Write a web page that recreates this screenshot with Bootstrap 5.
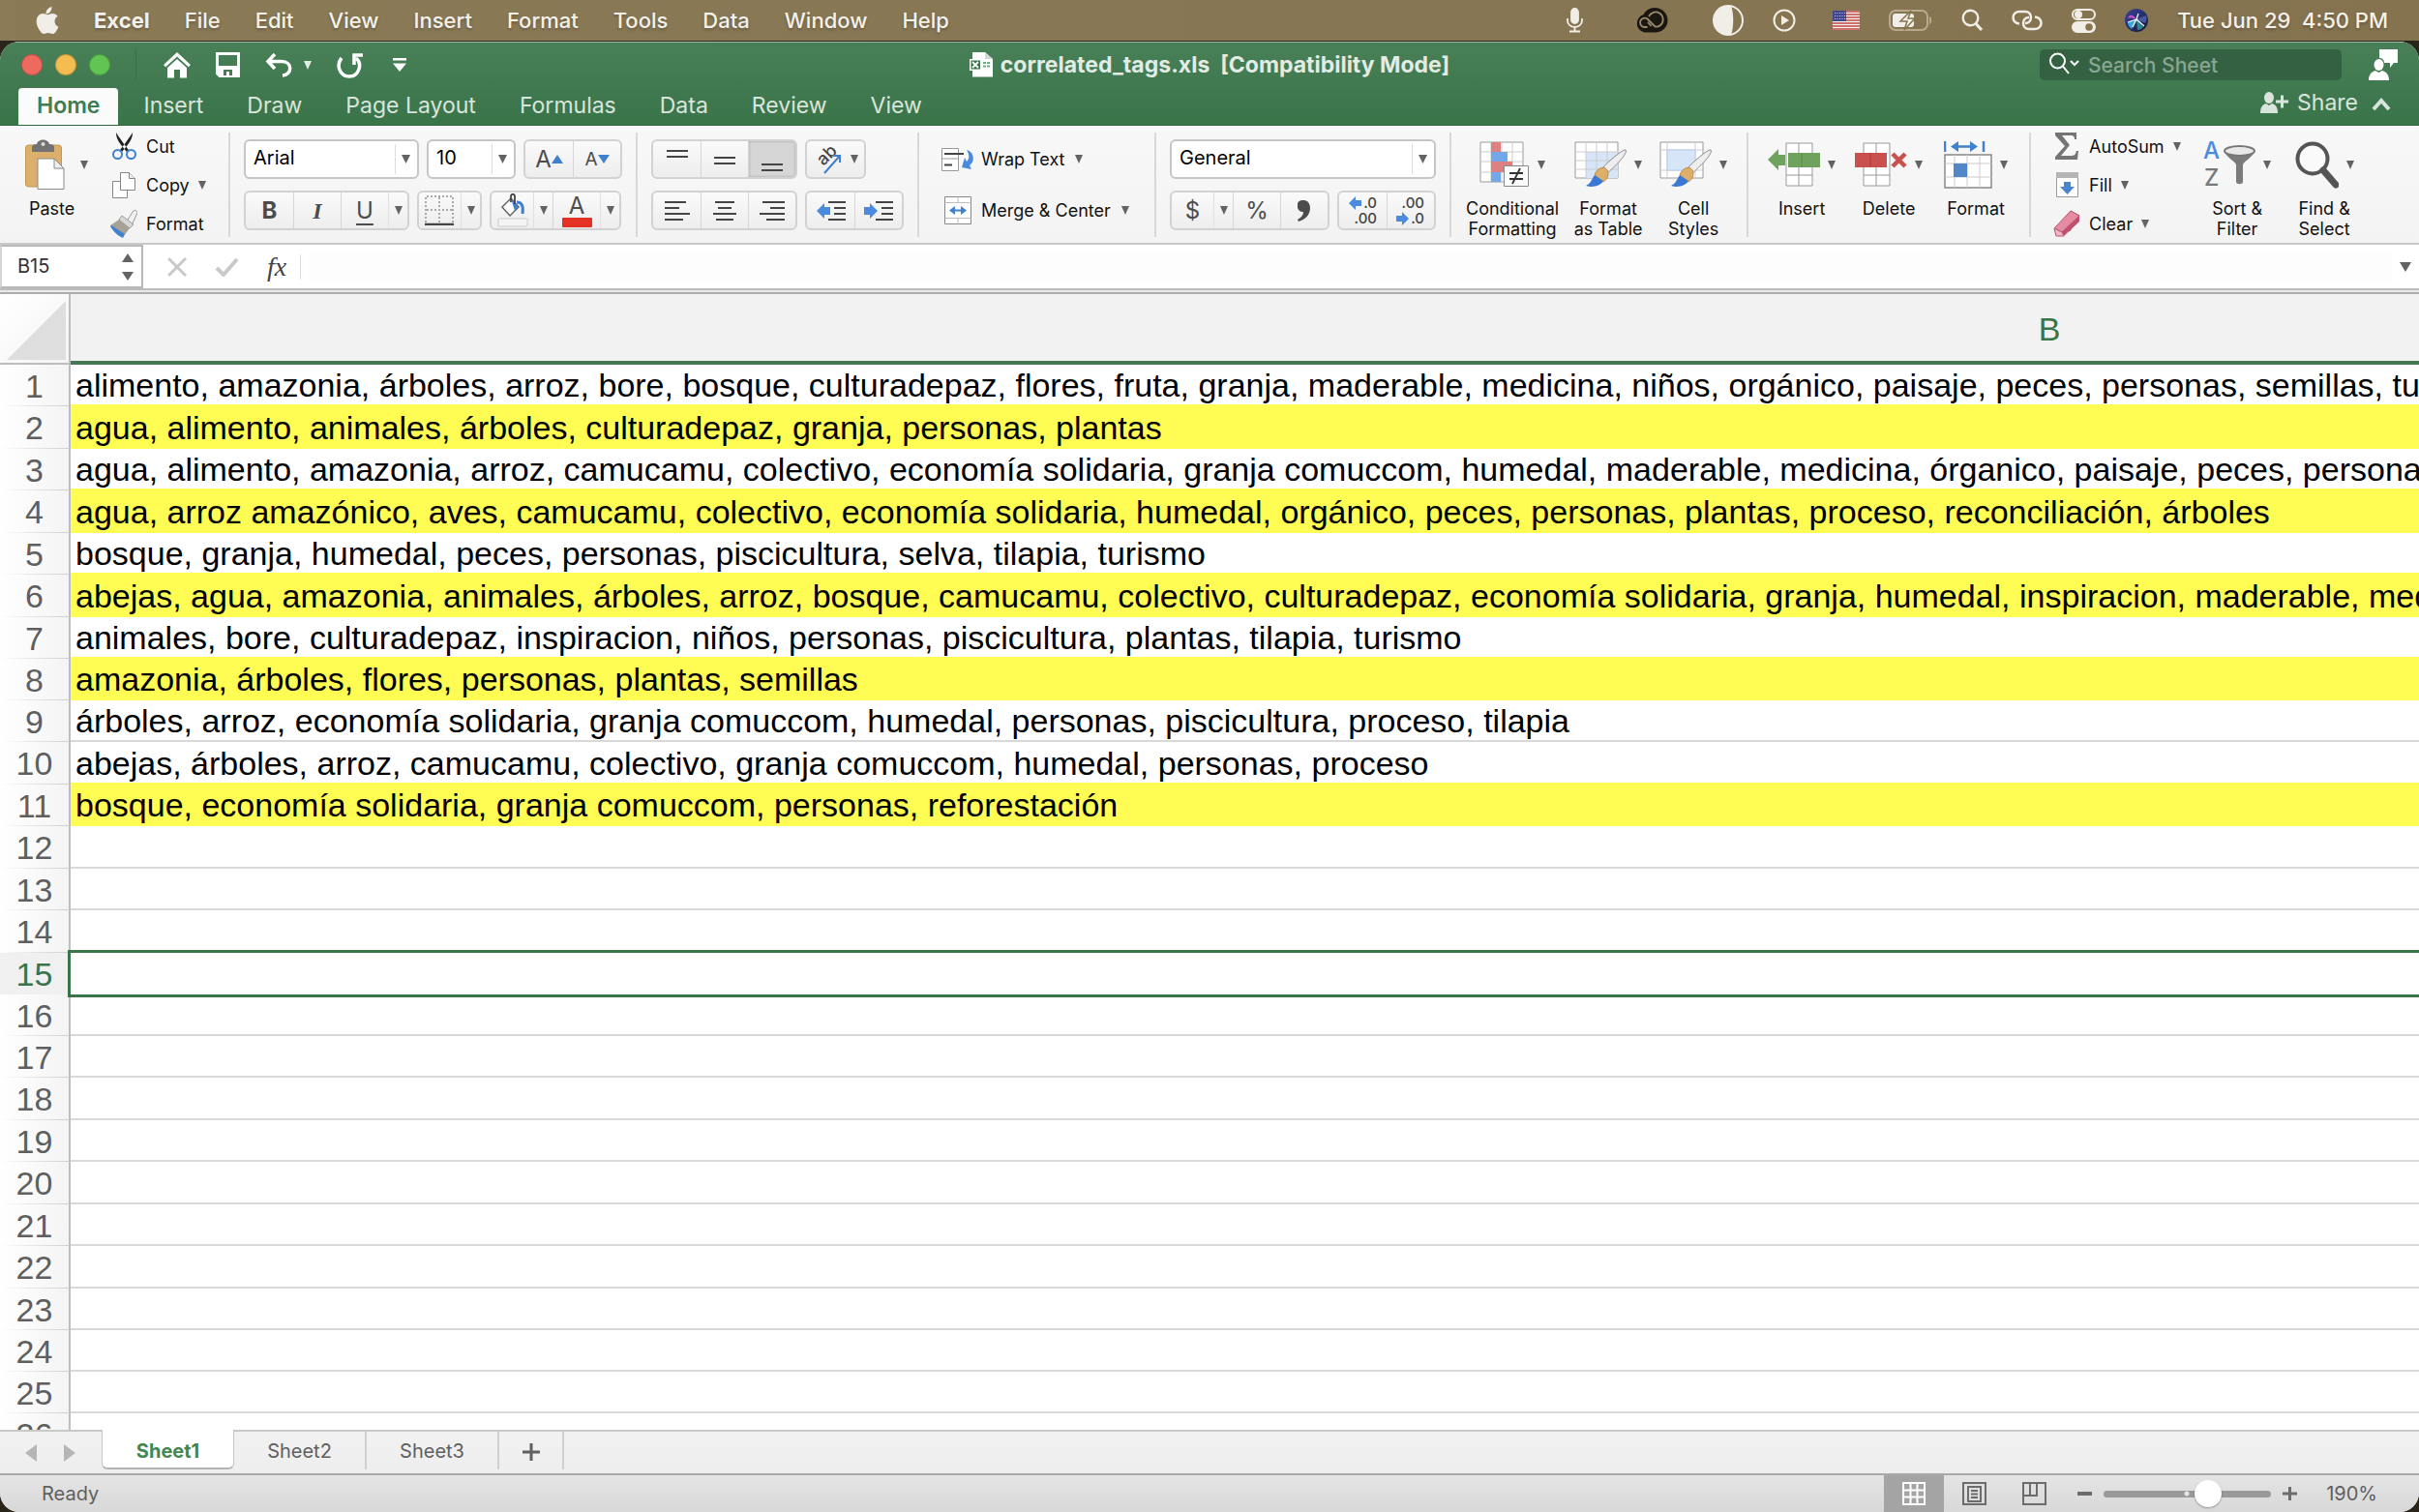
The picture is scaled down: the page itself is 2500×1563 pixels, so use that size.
<!DOCTYPE html>
<html lang="en">
<head>
<meta charset="utf-8">
<meta name="viewport" content="width=device-width, initial-scale=1">
<title>correlated_tags.xls</title>
<link href="https://cdn.jsdelivr.net/npm/bootstrap@5.3.0/dist/css/bootstrap.min.css" rel="stylesheet">
<style>
:root { --xl-green:#3a7449; --ink:#5f5f5f; --blue:#4a8be0; }
html, body { height:100%; }
body { font-family:Inter, "Liberation Sans", sans-serif; font-size:19px; line-height:21px; color:#111; background:#2a241a; overflow:hidden; }
button, input, select { font-family:inherit; color:inherit; }
button { background:none; border:0; padding:0; }
svg { display:block; flex:none; }
a { color:inherit; text-decoration:none; }

.menubar { height:42px; padding:0 32px 0 37px; background:linear-gradient(90deg,#8a7a56,#857350); color:#f4f1ea; font-size:22px; font-weight:500; text-shadow:0 2px 3px rgba(0,0,0,.25); }
.menubar .menus { gap:36px; }
.menubar .extras { gap:30px; }
.menubar .clock { white-space:pre; }

.app-window { margin-top:1px; min-height:0; border-radius:20px; overflow:hidden; background:#f4f4f4; }
.chrome { background:linear-gradient(#487f57,#3a7449); border-top:1px solid #9db8a4; border-bottom:1px solid #2f6640; height:87px; }
.title-row { display:grid; grid-template-columns:1fr auto 1fr; height:46px; color:#fff; }
.lights { gap:13px; padding-left:22px; }
.light { width:22px; height:22px; border-radius:50%; border:1px solid rgba(0,0,0,.2); }
.light.close-dot { background:#ee6a5f; }
.light.min-dot { background:#f5bd4f; }
.light.max-dot { background:#61c554; }
.quick { gap:26px; padding-left:28px; margin-left:26px; border-left:1px solid #3c6f4b; height:34px; }
.quick .tri { border-top-color:#e2ebe4; }
.title-text { font-size:23px; font-weight:700; color:#e2ebe4; white-space:pre; }
.account-side { gap:28px; padding-right:22px; }
.search { width:312px; height:32px; background:#356143; border-radius:5px; padding-left:10px; }
.search input { background:none; border:0; outline:0; font-size:21px; font-weight:500; color:#fff; padding:0; min-width:0; }
.search input::placeholder { color:#88a791; opacity:1; }
.tab-row { height:39px; padding:0 28px 0 19px; gap:7px; color:#d9e5dc; font-size:23px; font-weight:500; }
.tab-row .tab { height:38px; padding:0 19px 2px; }
.tab-row .tab.on { background:#fbfbfb; color:#3f7c50; border-radius:4px 4px 0 0; font-weight:600; }
.tab-row .side { height:38px; padding-bottom:8px; }

.ribbon { height:123px; background:linear-gradient(#f8f8f8,#f3f3f3); border-bottom:2px solid #c9c9c9; }
.rule { width:2px; height:108px; margin-top:7px; background:#d8d8d8; flex:none; }
.rows { padding:14px 14px 0 14px; gap:12px; }
.line { height:41px; gap:8px; }
.tri { width:0; height:0; border:4px solid transparent; border-top:9px solid #636363; border-bottom:0; flex:none; display:block; }
.seg { border:2px solid #d2d2d2; border-radius:6px; background:linear-gradient(#fafafa,#ededed); height:41px; overflow:hidden; flex:none; }
.seg > button { width:49px; display:flex; align-items:center; justify-content:center; color:#4c4c4c; }
.seg > button + button { border-left:1px solid #d6d6d6; }
.seg > button.narrow { width:43px; }
.seg > button.wide { width:59px; }
.seg > button.drop { width:20px; border-left-color:#e0e0e0; }
.seg > button.pressed { background:#d6d6d6; box-shadow:inset 0 0 3px rgba(0,0,0,.25); }
.glyph { font-size:24px; line-height:24px; }
.glyph.serif-i { font-family:"Liberation Serif", serif; font-style:italic; font-weight:700; }
.glyph.under { text-decoration:underline; text-underline-offset:5px; }
.box { height:41px; border:2px solid #c6c6c6; border-radius:6px; padding:0 24px 2px 8px; appearance:none; font-size:20px; color:#000; background-color:#fff; background-repeat:no-repeat; background-position:right 7px center, right 22px center; background-size:9px 9px, 1px 31px;
 background-image:url("data:image/svg+xml,%3Csvg xmlns='http://www.w3.org/2000/svg' viewBox='0 0 8 8'%3E%3Cpath d='M0 0h8L4 8z' fill='%23636363'/%3E%3C/svg%3E"), linear-gradient(#ddd,#ddd); }
.font-box { width:181px; }
.size-box { width:92px; }
.clip-group { width:236px; padding-left:26px; gap:14px; }
.small-cmds { padding-top:1px; }
.small-cmds > button, .wrap-cmds button { height:40px; display:flex; align-items:center; gap:9px; color:#111; font-size:18px; white-space:nowrap; }
.small-cmds .ico { width:28px; display:flex; justify-content:center; }
.edit-cmds { padding-left:23px; width:176px; }
.wrap-cmds { min-width:243px; padding:14px 0 0 23px; gap:12px; }
.wrap-cmds button { height:41px; gap:7px; }
.wrap-cmds .ico { width:34px; display:flex; justify-content:center; }
.bigs { padding:0 18px; gap:16px; }
.bigs.tight { padding-left:15px; gap:14px; }
.big { padding-top:15px; min-width:74px; display:flex; flex-direction:column; align-items:center; font-size:18px; line-height:21px; color:#111; }
.big .top { height:50px; margin-bottom:10px; display:flex; align-items:center; gap:8px; }

.formula { height:45px; background:#fff; }
.namebox { width:148px; border:2px solid #b9b9b9; border-left-color:#d5d5d5; padding:0 8px 0 16px; }
.namebox input { width:100px; border:0; outline:0; padding:0; font-size:20px; color:#333; }
.fx-tools { padding:0 14px 0 25px; gap:29px; }
.fx-tools .fx { font:italic 28px/28px "Liberation Serif", serif; color:#444; }
.formula .fxrule { width:1px; height:26px; background:#ddd; }
.formula .entry { border:0; outline:0; background:#fdfdfd; height:34px; }
.strip { height:6px; background:#e9e9e9; border-top:2px solid #bcbcbc; border-bottom:2px solid #adadad; flex:none; }

.grid-area { min-height:0; overflow:hidden; background:#fff; }
.cells { table-layout:fixed; border-collapse:separate; border-spacing:0; width:4163px; font-family:"Liberation Sans", Arial, sans-serif; font-size:34px; line-height:38px; color:#000; }
.cells .c-num { width:73px; }
.cells th, .cells td { padding:1px 0 0; font-weight:400; white-space:nowrap; overflow:hidden; }
.cells thead th { height:73px; background:#f2f2f2; color:var(--xl-green); text-align:center; border-bottom:4px solid #417a50; padding-top:3px; }
.cells thead th.corner { background:linear-gradient(135deg,#fff,#f4f4f4); border-bottom:2px solid #bdbdbd; border-right:2px solid #bdbdbd; }
.corner svg { margin-left:7px; }
.cells tbody th { text-align:center; color:var(--ink); border-right:2px solid #bdbdbd; border-bottom:1px solid transparent; background:linear-gradient(90deg,transparent,#cfcfcf) bottom/100% 1px no-repeat border-box, linear-gradient(90deg,#fff,#f4f4f4) border-box; }
.cells tbody td { padding-left:5px; border-bottom:2px solid #d9d9d9; }
.cells tbody tr { height:43px; }
.cells tbody tr:nth-child(even):not(:nth-child(8n)) { height:44px; }
.cells tr.hl td { background:#fffc54; border-bottom-color:#fffc54; }
.cells tr.pre td { border-bottom-color:#fffc54; }
.cells tr.cur th { color:var(--xl-green); background:#f0f0f0; }
.cells tr.cur td { outline:3px solid var(--xl-green); border-bottom-color:transparent; }

.sheetbar { height:45px; background:linear-gradient(#f1f1f1,#eee); border-top:2px solid #c9c9c9; color:var(--ink); font-size:20px; font-weight:500; flex:none; }
.sheetbar .nav-arrows { width:105px; padding-left:26px; gap:28px; }
.sheetbar .sheet { width:137px; height:39px; padding-top:2px; border-right:2px solid #d0d0d0; }
.sheetbar .sheet.on { height:41px; margin-top:-2px; padding-top:6px; background:#fff; color:#43874f; font-weight:700; border:1px solid #c4c4c4; border-top:0; border-bottom:2px solid #b3b3b3; border-radius:0 0 6px 6px; }
.sheetbar .sheet.plus { width:67px; }
.status { height:40px; background:linear-gradient(#e4e4e4,#d8d8d8); border-top:2px solid #a9a9a9; color:var(--ink); font-size:20px; flex:none; padding:0 43px; }
.status .view { width:62px; height:38px; display:flex; align-items:center; justify-content:center; }
.status .view.on { background:#a4a4a4; }
.status .zoom-out { margin-left:14px; }
.status .pct { width:83px; }
.zoom { appearance:none; width:173px; height:28px; background:none; margin:0 12px; }
.zoom::-webkit-slider-runnable-track { height:7px; border-radius:4px; background:radial-gradient(circle at 86px 3px,#e6e6e6 2px,transparent 3px), #999; }
.zoom::-webkit-slider-thumb { appearance:none; width:28px; height:28px; margin-top:-11px; border-radius:50%; background:#fff; box-shadow:0 1px 2px rgba(0,0,0,.35); }
</style>
</head>
<body class="d-flex flex-column">

<nav class="menubar d-flex align-items-center justify-content-between flex-shrink-0" aria-label="Menu bar">
  <div class="menus d-flex align-items-center">
    <a href="#" aria-label="Apple"><svg width="24" height="28" viewBox="0 0 24 28" fill="#f1eee7"><path d="M16.500 0c.2 2.300-.7 4.200-1.900 5.500-1.100 1.200-2.600 1.900-4 1.700C10.300 5.200 11.300 3.300 12.400 2.200 13.500 1 15.200.2 16.500 0zM22.700 9.800c-2.100 1.300-3.200 3-3.200 5.300 0 2.600 1.500 4.700 3.900 5.600-.6 1.700-1.500 3.300-2.500 4.700-1 1.400-2 2.600-3.700 2.600s-2.300-1-4.400-1-2.800 1-4.400 1c-1.700 0-2.800-1.300-3.800-2.700C2.400 22.500.7 18.800.7 15.200c0-5.300 3.400-8.100 6.800-8.100 1.900 0 3.400 1.200 4.600 1.200 1.100 0 2.800-1.300 5-1.300 1.800 0 4.100.7 5.600 2.800z"/></svg></a>
    <a href="#" class="fw-bold">Excel</a><a href="#">File</a><a href="#">Edit</a><a href="#">View</a><a href="#">Insert</a><a href="#">Format</a><a href="#">Tools</a><a href="#">Data</a><a href="#">Window</a><a href="#">Help</a>
  </div>
  <div class="extras d-flex align-items-center">
    <svg class="me-4" width="17" height="26" viewBox="0 0 17 26" fill="none" stroke="#f1eee7" stroke-width="1.800"><rect x="5" y="1" width="7" height="15" rx="3.500" fill="#f1eee7"/><path d="M1 11v2.500a7.500 6.500 0 0 0 15 0V11M8.500 20v4M3 24.500h11"/></svg>
    <svg class="me-3" width="34" height="26" viewBox="0 0 34 26" fill="none"><path d="M9.500 24.500A8.500 8.500 0 0 1 9 8c2-4 6-7 11-7 7 0 12.500 5 12.500 12S27 24.500 21 24.500z" fill="#1a1712" stroke="#1a1712" stroke-width="2"/><path d="M12.500 20H9.500a4.700 4.700 0 1 1 3-8.500L20 19M14 9c2-4 7-6 11-3.500 4.500 3 5 9 1 12.500-2 2-5 2-6 1M13 15l3.500 4" stroke="#9a8a66" stroke-width="1.800"/></svg>
    <svg width="32" height="32" viewBox="0 0 32 32"><circle cx="16" cy="16" r="15" fill="none" stroke="#f1eee7" stroke-width="2"/><path d="M19 1C6 0 1 8 1 16s6 16 18 15c3-8 3-22 0-30z" fill="#f1eee7"/></svg>
    <svg class="me-2" width="24" height="24" viewBox="0 0 24 24"><circle cx="12" cy="12" r="10.500" fill="none" stroke="#f1eee7" stroke-width="2"/><path d="M9 7l8 5-8 5z" fill="#f1eee7"/></svg>
    <svg width="28" height="20" viewBox="0 0 28 20"><path d="M0 0h28v20H0z" fill="#f4f1f1"/><path d="M0 1h28M0 4h28M0 7h28M0 10h28M0 13h28M0 16h28M0 19h28" stroke="#c1453f" stroke-width="1.500"/><path d="M0 0h14v11H0z" fill="#41478c"/><path d="M2 2.500h11M2 5.500h11M2 8.500h11" stroke="#c8c9e4" stroke-width="1" stroke-dasharray="1 1.500"/></svg>
    <svg width="45" height="24" viewBox="0 0 45 24" fill="none"><rect x="1" y="2" width="39" height="20" rx="6" stroke="#b7aa8c" stroke-width="2"/><path d="M42 8c3 1 3 7 0 8z" fill="#b7aa8c"/><rect x="4" y="5" width="22" height="14" rx="3" fill="#f1eee7"/><path d="M23 2L12 13h7l-3 9 11-12h-7z" fill="#f1eee7" stroke="#86754f" stroke-width="1.500"/></svg>
    <svg width="22" height="24" viewBox="0 0 22 24" fill="none" stroke="#f1eee7" stroke-width="2.400"><circle cx="9.500" cy="9.500" r="7.800"/><path d="M15 15.500l6 6.500" stroke-width="3"/></svg>
    <svg width="32" height="22" viewBox="0 0 32 22" fill="none" stroke="#f1eee7" stroke-width="2.500"><path d="M8 14.500C4 14 1.500 11.500 1.500 8S4.500 2 8 2h6c8 0 8 12 0 12"/><path d="M24 7.500c4 .5 6.500 3 6.500 6.500s-3 6-6.500 6h-6c-8 0-8-12 0-12"/></svg>
    <svg width="25" height="26" viewBox="0 0 25 26" fill="none" stroke="#f1eee7" stroke-width="2"><rect x="1" y="2" width="23" height="10" rx="5"/><circle cx="7" cy="7" r="4" fill="#f1eee7" stroke="none"/><rect x="1" y="15" width="23" height="10" rx="5" fill="#f1eee7"/><circle cx="18" cy="20" r="3.800" fill="#877651" stroke="none"/></svg>
    <svg width="24" height="24" viewBox="0 0 24 24"><defs><linearGradient id="siri" x2="1" y2="1"><stop offset="0" stop-color="#3d3f9a"/><stop offset=".5" stop-color="#27306e"/><stop offset="1" stop-color="#101530"/></linearGradient></defs><circle cx="12" cy="12" r="12" fill="url(#siri)"/><path d="M12 11C8 5 4 6 3 10c3-1 6 0 9 1z" fill="#c454c8"/><path d="M12 11l-5 10c-3-2-4-5-4-7z" fill="#39a7d8"/><path d="M12 11l10-4c1 4 0 6-1 8z" fill="#6b8be6" opacity=".5"/><path d="M12 11l1 11c3 0 5-2 6-3z" fill="#33c7b4" opacity=".6"/><path d="M3 14l9-3 2-6M12 11l8 7M12 11l-4 8" stroke="#f2fbff" stroke-width="1.300" fill="none"/></svg>
    <span class="clock">Tue Jun 29  4:50 PM</span>
  </div>
</nav>

<div class="app-window d-flex flex-column flex-grow-1">
  <header class="chrome flex-shrink-0">
    <div class="title-row align-items-center">
      <div class="d-flex align-items-center">
        <div class="lights d-flex align-items-center">
          <button class="light close-dot" aria-label="Close"></button><button class="light min-dot" aria-label="Minimize"></button><button class="light max-dot" aria-label="Zoom"></button>
        </div>
        <div class="quick d-flex align-items-center">
          <button aria-label="Home"><svg width="28" height="27" viewBox="0 0 28 27" fill="#fff"><path d="M14 0L0 13l2.200 2.200L14 4.500l11.800 10.700L28 13z"/><path d="M14 7L4 16v10.500h7V18h6v8.500h7V16z"/></svg></button>
          <button aria-label="Save"><svg width="25" height="26" viewBox="0 0 25 26" fill="none" stroke="#fff" stroke-width="3"><path d="M1.500 1.500h22v23H4l-2.500-2.500z"/><path d="M2 14h21v10H4l-2-2z" fill="#fff" stroke="none"/><path d="M8 18h9v6H8z" fill="#457d55" stroke="none"/><path d="M11 20h3v4h-3z" fill="#fff" stroke="none"/></svg></button>
          <button class="d-flex align-items-center gap-2" aria-label="Undo"><svg class="me-1" width="28" height="26" viewBox="0 0 28 26" fill="none" stroke="#fff" stroke-width="3.500"><path d="M10 2L3 9.500l7 7.500M3 9.500h14c12 0 11 14 1 14.500"/></svg><span class="tri"></span></button>
          <button aria-label="Redo"><svg width="28" height="27" viewBox="0 0 28 27" fill="none" stroke="#fff" stroke-width="3.500"><path d="M5 6C-1 13 3 25 13 25s14-13 7-19"/><path d="M27 3h-9v10"/></svg></button>
          <button class="ps-1" aria-label="Customize toolbar"><svg width="14" height="14" viewBox="0 0 14 14" fill="#fff"><path d="M0 0h14v2.500H0zM0 5.500h14L7 14z"/></svg></button>
        </div>
      </div>
      <div class="d-flex align-items-center gap-2">
        <svg width="24" height="26" viewBox="0 0 24 26"><path d="M3 0h13l8 7v18.500H3z" fill="#fff"/><path d="M16 0v7h8z" fill="#cfdad2"/><path d="M0 7h12v12H0z" fill="#fff"/><path d="M1.500 8.500h9.500v9H1.500z" fill="#3a7449"/><path d="M3 10l6 6M9 10l-6 6" stroke="#fff" stroke-width="1.800"/><path d="M14 11h7M14 14.500h7" stroke="#7aa887" stroke-width="2" stroke-dasharray="3 1"/></svg>
        <span class="title-text">correlated_tags.xls  [Compatibility Mode]</span>
      </div>
      <div class="account-side d-flex align-items-center justify-content-end">
        <label class="search d-flex align-items-center" aria-label="Search Sheet">
          <svg width="32" height="26" viewBox="0 0 32 26" fill="none" stroke="#fff" stroke-width="2"><circle cx="8.500" cy="9" r="7.500"/><path d="M14 14.500l6 7.500M22 9l4 4 4-4"/></svg>
          <input class="ms-2 flex-grow-1" type="text" placeholder="Search Sheet">
        </label>
        <button aria-label="Account"><svg width="30" height="32" viewBox="0 0 30 32" fill="#fff"><path d="M11 0h19v14h-4l-4 5v-5h-6c0-3-2-5-5-5z"/><ellipse cx="10.500" cy="16" rx="5" ry="6"/><path d="M0 32c0-6 3-9 7-10l3.500 2 3.500-2c4 1 7 4 7 10z"/></svg></button>
      </div>
    </div>
    <div class="tab-row d-flex align-items-end">
      <button class="tab on">Home</button><button class="tab">Insert</button><button class="tab">Draw</button><button class="tab">Page Layout</button><button class="tab">Formulas</button><button class="tab">Data</button><button class="tab">Review</button><button class="tab">View</button>
      <button class="side ms-auto d-flex align-items-center gap-2"><svg width="30" height="22" viewBox="0 0 30 22" fill="#d9e5dc"><ellipse cx="9" cy="6" rx="5" ry="6"/><path d="M0 22c0-6 2-9 6-10l3 2 3-2c4 1 6 4 6 10z"/><path d="M16 8.500h5v-5h3v5h5v3h-5v5h-3v-5h-5z"/></svg>Share</button>
      <button class="side ms-1" aria-label="Collapse ribbon"><svg class="mt-1" width="24" height="22" viewBox="0 0 24 22" fill="none" stroke="#d9e5dc" stroke-width="4"><path d="M5 16l8-9 8 9"/></svg></button>
    </div>
  </header>

  <section class="ribbon d-flex align-items-start flex-shrink-0" aria-label="Ribbon">
    <div class="clip-group d-flex align-items-start">
      <button class="big align-items-start"><span class="top gap-3"><svg width="41" height="52" viewBox="0 0 41 52"><rect x=".5" y="6" width="37" height="43" rx="3" fill="#dcb06c" stroke="#c3954f"/><path d="M7 13V8c0-2 2-3 5-3 1-6 12-6 13 0 3 0 5 1 5 3v5z" fill="#727272"/><circle cx="18.500" cy="5" r="2" fill="#ddd"/><path d="M13 20h17l10 10v21.500H13z" fill="#fff" stroke="#8a8a8a"/><path d="M30 20v10h10z" fill="#eee" stroke="#8a8a8a"/></svg><span class="tri"></span></span><span class="ms-1">Paste</span></button>
      <div class="small-cmds d-flex flex-column">
        <button><span class="ico"><svg width="25" height="28" viewBox="0 0 25 28" fill="none"><path d="M4 0c0 6 3 10 6 14l5 6 2-2C13 13 7 5 4 0zM21 0c0 6-3 10-6 14l-5 6-2-2C12 13 18 5 21 0z" fill="#222"/><ellipse cx="5.500" cy="22.500" rx="4.500" ry="4.500" stroke="#3f80d0" stroke-width="2"/><ellipse cx="19.500" cy="22.500" rx="4.500" ry="4.500" stroke="#3f80d0" stroke-width="2"/></svg></span>Cut</button>
        <button><span class="ico"><svg width="24" height="27" viewBox="0 0 24 27" fill="#fff" stroke="#858585"><path d="M.5 9.500h10l5 5v12H.5z"/><path d="M8.500.5h9l6 6v12h-15z"/><path d="M17.500.5v6h6" fill="#eee"/></svg></span>Copy<span class="tri"></span></button>
        <button><span class="ico"><svg width="28" height="30" viewBox="0 0 28 30"><path d="M17 13l6-10c2-3 6-1 4.500 2L22 17z" fill="#f2f2f2" stroke="#999"/><path d="M12 7l12 9-4 4-11-9z" fill="#d8d8d8" stroke="#999"/><path d="M9 11l11 9-7 9C9 27 3 22 0 17z" fill="#a8a095"/><path d="M1 17l14 9-2 4C8 28 3 23 0 18z" fill="#3f80d0"/></svg></span>Format</button>
      </div>
    </div>
    <div class="rule"></div>
    <div class="rows d-flex flex-column">
      <div class="line d-flex">
        <select class="box font-box" aria-label="Font"><option>Arial</option></select>
        <select class="box size-box" aria-label="Font size"><option>10</option></select>
        <div class="seg d-flex"><button aria-label="Grow font"><span class="glyph">A</span><svg width="12" height="9" viewBox="0 0 12 9"><path d="M0 9h12L6 0z" fill="#3f80d0"/></svg></button><button aria-label="Shrink font"><span>A</span><svg width="12" height="9" viewBox="0 0 12 9"><path d="M0 0h12L6 9z" fill="#3f80d0"/></svg></button></div>
      </div>
      <div class="line d-flex">
        <div class="seg d-flex"><button class="glyph fw-bold">B</button><button class="glyph serif-i">I</button><button class="glyph under">U</button><button class="drop" aria-label="Underline style"><span class="tri"></span></button></div>
        <div class="seg d-flex"><button class="narrow" aria-label="Borders"><svg width="31" height="31" viewBox="0 0 31 31" fill="none" stroke="#aaa" stroke-width="2" stroke-dasharray="2 2"><path d="M1 28V1h28v27M15 2v26M2 15h27"/><path d="M0 30h30" stroke="#444" stroke-width="2.500" stroke-dasharray="none"/></svg></button><button class="drop" aria-label="Border style"><span class="tri"></span></button></div>
        <div class="seg d-flex"><button class="narrow" aria-label="Fill colour"><svg width="32" height="35" viewBox="0 0 32 35" fill="none"><path d="M14 5l8 9-9 9-8-9z" fill="#fff" stroke="#666" stroke-width="1.500"/><path d="M14 5l8 9-4 4z" fill="#3f80d0"/><path d="M20 9c6 0 7 5 6 12" stroke="#3f80d0" stroke-width="3"/><path d="M14 9V3c0-3 4-3 4 0v8" stroke="#444" stroke-width="1.800"/><rect x="1" y="26" width="30" height="8" rx="1" fill="#f4f4f4" stroke="#ccc"/></svg></button><button class="drop" aria-label="Fill colours"><span class="tri"></span></button><button class="flex-column" aria-label="Font colour"><span class="glyph">A</span><svg width="31" height="10" viewBox="0 0 31 10"><rect width="31" height="10" rx="1" fill="#e33125"/></svg></button><button class="drop" aria-label="Font colours"><span class="tri"></span></button></div>
      </div>
    </div>
    <div class="rule"></div>
    <div class="rows d-flex flex-column">
      <div class="line d-flex">
        <div class="seg d-flex"><button aria-label="Top"><svg width="22" height="31" viewBox="0 0 22 31" stroke="#444" stroke-width="2"><path d="M0 7h22M0 13h22"/></svg></button><button aria-label="Middle"><svg width="22" height="31" viewBox="0 0 22 31" stroke="#444" stroke-width="2"><path d="M0 14h22M0 20h22"/></svg></button><button class="pressed" aria-label="Bottom"><svg width="22" height="31" viewBox="0 0 22 31" stroke="#444" stroke-width="2"><path d="M0 21h22M0 27h22"/></svg></button></div>
        <div class="seg d-flex"><button class="wide gap-2" aria-label="Orientation"><svg width="31" height="37" viewBox="0 0 31 37"><text x="0" y="0" transform="translate(11 26) rotate(-45)" font-family="Inter" font-size="18" font-weight="500" fill="#444">ab</text><path d="M12 33L28 15M21 15h7v7" fill="none" stroke="#3f80d0" stroke-width="2"/></svg><span class="tri"></span></button></div>
      </div>
      <div class="line d-flex">
        <div class="seg d-flex"><button aria-label="Left"><svg width="26" height="20" viewBox="0 0 26 20" stroke="#444" stroke-width="2"><path d="M0 1h22M0 7h15M0 13h26M0 19h19"/></svg></button><button aria-label="Centre"><svg width="24" height="20" viewBox="0 0 24 20" stroke="#444" stroke-width="2"><path d="M2 1h20M5 7h14M0 13h24M3 19h18"/></svg></button><button aria-label="Right"><svg width="26" height="20" viewBox="0 0 26 20" stroke="#444" stroke-width="2"><path d="M3 1h23M11 7h15M0 13h26M7 19h19"/></svg></button></div>
        <div class="seg d-flex"><button aria-label="Decrease indent"><svg width="30" height="20" viewBox="0 0 30 20"><path d="M12 1h18M18 7h12M18 13h12M12 19h18" stroke="#444" stroke-width="2"/><path d="M0 10l8-8v4h6v8H8v4z" fill="#4a8be0"/></svg></button><button aria-label="Increase indent"><svg width="30" height="20" viewBox="0 0 30 20"><path d="M12 1h18M18 7h12M18 13h12M12 19h18" stroke="#444" stroke-width="2"/><path d="M14 10L6 2v4H0v8h6v4z" fill="#4a8be0"/></svg></button></div>
      </div>
    </div>
    <div class="rule"></div>
    <div class="wrap-cmds d-flex flex-column">
      <button><span class="ico"><svg width="34" height="26" viewBox="0 0 34 26"><path d="M.5 1.500h17v23H.5zM.5 12h17" fill="#fff" stroke="#999"/><path d="M3 7h20M3 18.500h8" stroke="#444" stroke-width="2"/><path d="M26 3c8 2 9 12 3 16l2 4-10-2 3-10 2 4c3-3 3-7 0-12z" fill="#4a8be0"/></svg></span>Wrap Text<span class="tri ms-1"></span></button>
      <button><span class="ico"><svg width="28" height="29" viewBox="0 0 28 29"><path d="M.5.500h27v28H.5z" fill="#fff" stroke="#888"/><path d="M.5 6.500h27M.5 22.500h27M14 .5v6M14 22.500v6" stroke="#bbb"/><path d="M9 14.500h10" stroke="#3f80d0" stroke-width="2"/><path d="M5 14.500l6-4.500v9zM23 14.500L17 10v9z" fill="#3f80d0"/></svg></span>Merge &amp; Center<span class="tri ms-1"></span></button>
    </div>
    <div class="rule"></div>
    <div class="rows d-flex flex-column">
      <div class="line d-flex"><select class="box w-100" aria-label="Number format"><option>General</option></select></div>
      <div class="line d-flex">
        <div class="seg d-flex"><button class="glyph narrow">$</button><button class="drop" aria-label="Currencies"><span class="tri"></span></button><button class="glyph">%</button><button aria-label="Comma style"><svg width="14" height="22" viewBox="0 0 14 22"><path d="M4 0c6-1 9 3 9 8 0 7-5 12-12 14l-1-2c4-2 6-5 6-8-7 1-9-11-2-12z" fill="#4c4c4c"/></svg></button></div>
        <div class="seg d-flex"><button aria-label="Increase decimal"><svg width="34" height="37" viewBox="0 0 34 37" font-family="Inter" font-size="15" font-weight="500" fill="#444"><path d="M2 11l7-7v4h6v6H9v4z" fill="#4a8be0"/><text x="31" y="16" text-anchor="end">.0</text><text x="31" y="32" text-anchor="end">.00</text></svg></button><button aria-label="Decrease decimal"><svg width="34" height="37" viewBox="0 0 34 37" font-family="Inter" font-size="15" font-weight="500" fill="#444"><path d="M15 27l-7-7v4H2v6h6v4z" fill="#4a8be0"/><text x="31" y="16" text-anchor="end">.00</text><text x="31" y="32" text-anchor="end">.0</text></svg></button></div>
      </div>
    </div>
    <div class="rule"></div>
    <div class="bigs tight d-flex align-items-start">
      <button class="big"><span class="top"><svg width="52" height="48" viewBox="0 0 52 48"><path d="M1 1h44v41H1z" fill="#fff" stroke="#999"/><path d="M12 1v41M23 1v41M34 1v41M1 11h44M1 21h44M1 32h44" stroke="#ccc"/><path d="M12 1h10v10H12zM12 21h22v11H12z" fill="#dc8080"/><path d="M12 11h17v10H12zM12 32h10v10H12z" fill="#72a7e8"/><path d="M25.500 25.500h25v21h-25z" fill="#fbfbfb" stroke="#888"/><path d="M31 33h14M31 39h14M42 28l-8 16" stroke="#333" stroke-width="1.800"/></svg><span class="tri"></span></span><span>Conditional<br>Formatting</span></button>
      <button class="big"><span class="top"><svg width="54" height="50" viewBox="0 0 54 50"><path d="M1 2h44v37H1z" fill="#fff" stroke="#999"/><path d="M12 12h33v27H12z" fill="#d6e5f7"/><path d="M12 2v37M23 2v37M34 2v37M1 12h44M1 21h44M1 30h44" stroke="#ccc"/><path d="M53 10c3 4-14 20-19 24l-5-5C34 23 50 9 53 10z" fill="#eee" stroke="#8c8c8c"/><path d="M27 29c4-2 8 1 8 5s-2 8-6 9l-8-7c1-3 3-6 6-7z" fill="#ddb06a" stroke="#b88a45"/><path d="M21 36l9 6c-4 6-12 7-18 5 5-2 6-7 9-11z" fill="#3a78d6"/></svg><span class="tri"></span></span><span>Format<br>as Table</span></button>
      <button class="big"><span class="top"><svg width="54" height="50" viewBox="0 0 54 50"><path d="M1 2h44v37H1z" fill="#fff" stroke="#999"/><path d="M8 2v37M37 2v37M1 10h44M1 31h44" stroke="#ccc"/><path d="M8 10h29v21H8z" fill="#d6e5f7" stroke="#b7cdea"/><path d="M53 10c3 4-14 20-19 24l-5-5C34 23 50 9 53 10z" fill="#eee" stroke="#8c8c8c"/><path d="M27 29c4-2 8 1 8 5s-2 8-6 9l-8-7c1-3 3-6 6-7z" fill="#ddb06a" stroke="#b88a45"/><path d="M21 36l9 6c-4 6-12 7-18 5 5-2 6-7 9-11z" fill="#3a78d6"/></svg><span class="tri"></span></span><span>Cell<br>Styles</span></button>
    </div>
    <div class="rule"></div>
    <div class="bigs d-flex align-items-start">
      <button class="big"><span class="top"><svg width="54" height="46" viewBox="0 0 54 46"><path d="M19 1h27v44H19zM32 1v44M19 34h27" fill="#fff" stroke="#999"/><path d="M21 11h33v15H21z" fill="#6fa25c"/><path d="M35 11v15" stroke="#5a8d48"/><path d="M0 18L11 7v6h7v11h-7v5z" fill="#6fa25c"/></svg><span class="tri"></span></span><span>Insert</span></button>
      <button class="big"><span class="top"><svg width="54" height="46" viewBox="0 0 54 46"><path d="M9 1h27v44H9zM22 1v44M9 34h27" fill="#fff" stroke="#999"/><path d="M0 11h33v15H0z" fill="#c9504c"/><path d="M16 11v15" stroke="#aa3d3a"/><path d="M39 12l13 13M52 12L39 25" stroke="#c9504c" stroke-width="4.500"/></svg><span class="tri"></span></span><span>Delete</span></button>
      <button class="big"><span class="top"><svg width="50" height="50" viewBox="0 0 50 50"><path d="M1 15h48v34H1z" fill="#fff" stroke="#888" stroke-width="1.500"/><path d="M11 15v34M24 15v34M37 15v34M1 24h48M1 38h48" stroke="#ccc"/><path d="M10 24h14v14H10z" fill="#5087c9"/><path d="M1 1v11M41 1v11M12 6.500h18" stroke="#3f80d0" stroke-width="2.500"/><path d="M7 6.500l8-5.500v11zM35 6.500L27 1v11z" fill="#3f80d0"/></svg><span class="tri"></span></span><span>Format</span></button>
    </div>
    <div class="rule"></div>
    <div class="small-cmds edit-cmds d-flex flex-column">
      <button><span class="ico"><svg width="24" height="28" viewBox="0 0 24 28"><path d="M0 0h22v7h-2c0-3-1-4-4-4H7l8 10-9 11h10c4 0 5-1 6-5h2l-1 9H0v-3l10-11L0 3z" fill="#757575"/></svg></span>AutoSum<span class="tri"></span></button>
      <button><span class="ico"><svg width="23" height="26" viewBox="0 0 23 26"><path d="M.5.500h22v25H.5z" fill="#fff" stroke="#999"/><path d="M0 0h23v6H0z" fill="#b5b5b5"/><path d="M8 10h7v5h4l-7.500 8L4 15h4z" fill="#4a84cf"/></svg></span>Fill<span class="tri"></span></button>
      <button><span class="ico"><svg width="28" height="28" viewBox="0 0 28 28"><path d="M18 1l9 5-10 16-9-5z" fill="#e9a0b1" stroke="#b8566f"/><path d="M18 1L1 19l8 4L27 6z" fill="#e58ba2" stroke="#b8566f"/><path d="M27 6v6L11 27l-2-4z" fill="#c0506c"/><path d="M1 19l8 4 2 4-8 0z" fill="#f0b8c5" stroke="#b8566f"/></svg></span>Clear<span class="tri"></span></button>
    </div>
    <div class="d-flex align-items-start gap-3">
      <button class="big"><span class="top"><svg width="54" height="56" viewBox="0 0 54 56"><g font-family="Inter" font-size="24" font-weight="500"><text x="0" y="22" fill="#4a8be0">A</text><text x="1" y="50" fill="#777">Z</text></g><path d="M22 14c0 5 10 10 12 14v18c0 3 7 3 7 0V28c2-4 12-9 12-14z" fill="#7b7b7b"/><ellipse cx="37.500" cy="14" rx="15.500" ry="5" fill="#e8e8e8" stroke="#777" stroke-width="2"/></svg><span class="tri"></span></span><span>Sort &amp;<br>Filter</span></button>
      <button class="big"><span class="top"><svg width="45" height="50" viewBox="0 0 45 50" fill="none"><circle cx="18" cy="19" r="15.500" fill="#fafafa" stroke="#555" stroke-width="4"/><path d="M29 31l13 15" stroke="#555" stroke-width="7" stroke-linecap="round"/></svg><span class="tri"></span></span><span>Find &amp;<br>Select</span></button>
    </div>
  </section>

  <section class="formula d-flex align-items-center flex-shrink-0" aria-label="Formula bar">
    <div class="namebox d-flex align-items-center justify-content-between align-self-stretch">
      <input type="text" value="B15" aria-label="Name box">
      <svg width="12" height="28" viewBox="0 0 12 28" fill="#636363"><path d="M0 9h12L6 0zM0 19h12l-6 9z"/></svg>
    </div>
    <div class="fx-tools d-flex align-items-center">
      <button aria-label="Cancel"><svg width="20" height="20" viewBox="0 0 20 20" stroke="#c9c9c9" stroke-width="3"><path d="M1 1l18 18M19 1L1 19"/></svg></button>
      <button aria-label="Enter"><svg width="25" height="20" viewBox="0 0 25 20" fill="none" stroke="#c9c9c9" stroke-width="4"><path d="M2 11l7 7L23 2"/></svg></button>
      <button class="fx" aria-label="Insert function">fx</button>
    </div>
    <div class="fxrule"></div>
    <input class="entry flex-grow-1 mx-2" type="text" aria-label="Formula">
    <button class="me-2" aria-label="Expand formula bar"><svg width="12" height="10" viewBox="0 0 12 10"><path d="M0 0h12L6 10z" fill="#636363"/></svg></button>
  </section>
  <div class="strip"></div>

  <main class="grid-area flex-grow-1">
    <table class="cells">
      <colgroup><col class="c-num"><col></colgroup>
      <thead><tr><th class="corner" aria-label="Select all"><svg width="61" height="61" viewBox="0 0 61 61"><path d="M61 0v61H0z" fill="#dedede"/></svg></th><th scope="col">B</th></tr></thead>
      <tbody>
        <tr class="pre"><th scope="row">1</th><td>alimento, amazonia, árboles, arroz, bore, bosque, culturadepaz, flores, fruta, granja, maderable, medicina, niños, orgánico, paisaje, peces, personas, semillas, turismo</td></tr>
        <tr class="hl"><th scope="row">2</th><td>agua, alimento, animales, árboles, culturadepaz, granja, personas, plantas</td></tr>
        <tr class="pre"><th scope="row">3</th><td>agua, alimento, amazonia, arroz, camucamu, colectivo, economía solidaria, granja comuccom, humedal, maderable, medicina, órganico, paisaje, peces, personas,</td></tr>
        <tr class="hl"><th scope="row">4</th><td>agua, arroz amazónico, aves, camucamu, colectivo, economía solidaria, humedal, orgánico, peces, personas, plantas, proceso, reconciliación, árboles</td></tr>
        <tr class="pre"><th scope="row">5</th><td>bosque, granja, humedal, peces, personas, piscicultura, selva, tilapia, turismo</td></tr>
        <tr class="hl"><th scope="row">6</th><td>abejas, agua, amazonia, animales, árboles, arroz, bosque, camucamu, colectivo, culturadepaz, economía solidaria, granja, humedal, inspiracion, maderable, medicina</td></tr>
        <tr class="pre"><th scope="row">7</th><td>animales, bore, culturadepaz, inspiracion, niños, personas, piscicultura, plantas, tilapia, turismo</td></tr>
        <tr class="hl"><th scope="row">8</th><td>amazonia, árboles, flores, personas, plantas, semillas</td></tr>
        <tr><th scope="row">9</th><td>árboles, arroz, economía solidaria, granja comuccom, humedal, personas, piscicultura, proceso, tilapia</td></tr>
        <tr class="pre"><th scope="row">10</th><td>abejas, árboles, arroz, camucamu, colectivo, granja comuccom, humedal, personas, proceso</td></tr>
        <tr class="hl"><th scope="row">11</th><td>bosque, economía solidaria, granja comuccom, personas, reforestación</td></tr>
        <tr><th scope="row">12</th><td></td></tr>
        <tr><th scope="row">13</th><td></td></tr>
        <tr><th scope="row">14</th><td></td></tr>
        <tr class="cur"><th scope="row">15</th><td></td></tr>
        <tr><th scope="row">16</th><td></td></tr>
        <tr><th scope="row">17</th><td></td></tr>
        <tr><th scope="row">18</th><td></td></tr>
        <tr><th scope="row">19</th><td></td></tr>
        <tr><th scope="row">20</th><td></td></tr>
        <tr><th scope="row">21</th><td></td></tr>
        <tr><th scope="row">22</th><td></td></tr>
        <tr><th scope="row">23</th><td></td></tr>
        <tr><th scope="row">24</th><td></td></tr>
        <tr><th scope="row">25</th><td></td></tr>
        <tr><th scope="row">26</th><td></td></tr>
      </tbody>
    </table>
  </main>

  <div class="sheetbar d-flex align-items-start">
    <div class="nav-arrows d-flex align-items-center align-self-center">
      <button aria-label="Previous sheet"><svg width="12" height="18" viewBox="0 0 12 18"><path d="M12 0v18L0 9z" fill="#b5b5b5"/></svg></button>
      <button aria-label="Next sheet"><svg width="12" height="18" viewBox="0 0 12 18"><path d="M0 0v18l12-9z" fill="#b5b5b5"/></svg></button>
    </div>
    <button class="sheet on">Sheet1</button><button class="sheet">Sheet2</button><button class="sheet">Sheet3</button>
    <button class="sheet plus d-flex align-items-center justify-content-center" aria-label="Add sheet"><svg width="18" height="18" viewBox="0 0 18 18" stroke="#5f5f5f" stroke-width="3"><path d="M9 0v18M0 9h18"/></svg></button>
  </div>
  <footer class="status d-flex align-items-center">
    <span>Ready</span>
    <div class="d-flex align-items-center ms-auto">
      <button class="view on" aria-label="Normal view"><svg width="24" height="24" viewBox="0 0 24 24" fill="none" stroke="#fff" stroke-width="2"><path d="M1 1h22v22H1zM8.500 1v22M15.500 1v22M1 8.500h22M1 15.500h22"/></svg></button>
      <button class="view" aria-label="Page layout view"><svg width="25" height="24" viewBox="0 0 25 24" fill="none" stroke="#6c6c6c" stroke-width="2"><path d="M1 1h23v22H1zM6 5h13v15H6zM9 9h7M9 12.500h7M9 16h7"/></svg></button>
      <button class="view" aria-label="Page break view"><svg width="25" height="24" viewBox="0 0 25 24" fill="none" stroke="#6c6c6c" stroke-width="2"><path d="M1 1h23v22H1zM1 14h14V1M8 1v13"/></svg></button>
      <button class="zoom-out" aria-label="Zoom out"><svg width="15" height="14" viewBox="0 0 15 14" stroke="#6c6c6c" stroke-width="4"><path d="M0 7h15"/></svg></button>
      <input class="zoom" type="range" min="0" max="100" value="65" aria-label="Zoom">
      <button aria-label="Zoom in"><svg width="15" height="14" viewBox="0 0 15 14" stroke="#6c6c6c" stroke-width="3"><path d="M0 7h15M7.500 0v14"/></svg></button>
      <span class="pct text-end">190%</span>
    </div>
  </footer>
</div>
<script src="https://cdn.jsdelivr.net/npm/bootstrap@5.3.0/dist/js/bootstrap.bundle.min.js"></script>
</body>
</html>
